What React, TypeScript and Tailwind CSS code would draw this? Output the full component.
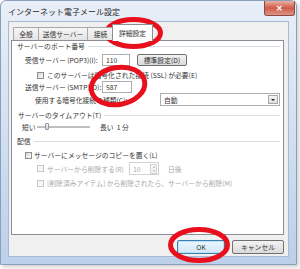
import React from "react";

function Check({ disabled = false }: { disabled?: boolean }) {
  return (
    <span
      className={
        disabled
          ? "inline-block w-[7px] h-[7px] shrink-0 border border-[#c8c8c8] bg-[#f6f6f6]"
          : "inline-block w-[7px] h-[7px] shrink-0 border border-[#8e8f8f] bg-linear-to-br from-[#d8d8d8] to-[#fbfbfb]"
      }
    />
  );
}

function GroupHeader({ label, left }: { label: string; left: string }) {
  return (
    <div className={"flex items-center h-[10px] pr-[3px] " + left}>
      <span className="whitespace-nowrap">{label}</span>
      <span className="flex-1 h-px bg-[#d5dfe5] ml-[3px]" />
    </div>
  );
}

export default function App() {
  return (
    <div className="relative w-[300px] h-[269px] bg-white overflow-hidden font-['Noto_Sans_CJK_JP',sans-serif] text-[6.8px] leading-[10px] text-[#333]">
      {/* Window */}
      <div className="w-[297px] h-[265px] rounded-t-[6px] border border-[#8a9fba] bg-linear-to-b from-[#e9eff7] via-[#d2e0f1] to-[#bcd0ea] flex flex-col shadow-[2px_2px_4px_rgba(0,0,0,0.2)]">
        {/* Title bar */}
        <div className="h-[20px] flex justify-between items-start shrink-0">
          <span className="pl-[7px] pt-[6px] text-[8px] leading-[10px] text-[#2a2a2a] whitespace-nowrap">
            インターネット電子メール設定
          </span>
          <div className="w-[31px] h-[15px] mr-[1px] rounded-b-[3px] border border-t-0 border-[#8a4a42] bg-linear-to-b from-[#eab0a2] via-[#cf5a4c] to-[#dd9583] flex items-center justify-center">
            <span className="text-white text-[8px] leading-[8px] font-bold">✕</span>
          </div>
        </div>
        {/* Body */}
        <div className="flex-1 flex px-[7px] pb-[7px]">
          <div className="flex-1 border border-[#a7bad2] bg-[#f0f0f0] flex flex-col pl-[2px] pr-[4px] pt-[2px]">
            {/* Tabs */}
            <div className="h-[16px] flex items-end pl-[2px] relative z-10">
              <div className="w-[26px] h-[13px] border border-b-0 border-[#a8a8a8] bg-linear-to-b from-[#f6f6f6] to-[#e4e4e4] flex items-center justify-center">
                全般
              </div>
              <div className="w-[49px] h-[13px] border border-b-0 border-l-0 border-[#a8a8a8] bg-linear-to-b from-[#f6f6f6] to-[#e4e4e4] flex items-center justify-center whitespace-nowrap">
                送信サーバー
              </div>
              <div className="w-[26px] h-[13px] border border-b-0 border-l-0 border-[#a8a8a8] bg-linear-to-b from-[#f6f6f6] to-[#e4e4e4] flex items-center justify-center">
                接続
              </div>
              <div className="w-[41px] h-[17px] -ml-[2px] -mb-[1px] border border-b-0 border-[#8c8e94] bg-white flex items-center justify-center whitespace-nowrap">
                詳細設定
              </div>
            </div>
            {/* Panel */}
            <div className="w-[273px] h-[195px] border border-[#8c8e94] bg-white flex flex-col">
              <GroupHeader label="サーバーのポート番号" left="pl-[5px]" />
              {/* 受信 */}
              <div className="mt-[3px] h-[12px] flex items-center pl-[13px]">
                <span className="w-[77px] whitespace-nowrap">受信サーバー (POP3)(I):</span>
                <div className="w-[28px] h-[12px] border border-[#abadb3] bg-white pl-[3px] flex items-center">110</div>
                <div className="ml-[7px] w-[50px] h-[12px] border border-[#707070] rounded-[2px] bg-linear-to-b from-[#f3f3f3] to-[#dadada] flex items-center justify-center whitespace-nowrap">
                  標準設定(D)
                </div>
              </div>
              {/* SSL */}
              <div className="mt-[4px] h-[10px] flex items-center pl-[25px] gap-[3px]">
                <Check />
                <span className="whitespace-nowrap">このサーバーは暗号化された接続 (SSL) が必要(E)</span>
              </div>
              {/* 送信 */}
              <div className="mt-[1px] h-[12px] flex items-center pl-[13px]">
                <span className="w-[77px] whitespace-nowrap">送信サーバー (SMTP)(O):</span>
                <div className="w-[30px] h-[12px] border border-[#abadb3] bg-white pl-[3px] flex items-center">587</div>
              </div>
              {/* 暗号化 */}
              <div className="h-[13px] flex items-center pl-[23px]">
                <span className="w-[125px] whitespace-nowrap">使用する暗号化接続の種類(C):</span>
                <div className="w-[120px] h-[13px] border border-[#abadb3] bg-white flex items-center justify-between pl-[3px] pr-[1px]">
                  <span>自動</span>
                  <div className="w-[10px] h-[9px] border border-[#a8a8a8] bg-linear-to-b from-[#f4f4f4] to-[#dedede] flex items-center justify-center">
                    <span className="w-0 h-0 border-l-[2px] border-r-[2px] border-t-[2px] border-l-transparent border-r-transparent border-t-[#222]" />
                  </div>
                </div>
              </div>
              {/* Timeout */}
              <div className="mt-[4px]">
                <GroupHeader label="サーバーのタイムアウト(T)" left="pl-[6px]" />
              </div>
              <div className="mt-[2px] h-[10px] flex items-center pl-[10px]">
                <span className="w-[15px] whitespace-nowrap">短い</span>
                <div className="relative w-[53px] h-[10px] flex items-center">
                  <div className="w-full h-[2px] border border-[#c0c0c0] bg-[#e7eaea]" />
                  <div className="absolute left-[8px] top-[1px] w-[4px] h-[7px] border border-[#8a96a4] bg-linear-to-b from-[#f3f5f7] to-[#cfd6de] rounded-[1px]" />
                </div>
                <span className="ml-[10px] whitespace-nowrap">長い&nbsp;&nbsp;1 分</span>
              </div>
              {/* 配信 */}
              <div className="mt-[4px]">
                <GroupHeader label="配信" left="pl-[5px]" />
              </div>
              <div className="mt-[4px] h-[10px] flex items-center pl-[13px] gap-[2px]">
                <Check />
                <span className="whitespace-nowrap">サーバーにメッセージのコピーを置く(L)</span>
              </div>
              <div className="mt-[2px] h-[13px] flex items-center pl-[25px] text-[#a8a8a8]">
                <Check disabled />
                <span className="ml-[3px] w-[82px] whitespace-nowrap">サーバーから削除する(R)</span>
                <div className="w-[30px] h-[13px] border border-[#d2d2d2] bg-white flex items-center justify-between pl-[3px] pr-[1px]">
                  <span>10</span>
                  <div className="w-[7px] h-[10px] flex flex-col border border-[#d5d5d5] bg-[#f4f4f4]">
                    <div className="flex-1 flex items-center justify-center">
                      <span className="w-0 h-0 border-l-[1.5px] border-r-[1.5px] border-b-[2px] border-l-transparent border-r-transparent border-b-[#b0b0b0]" />
                    </div>
                    <div className="flex-1 flex items-center justify-center">
                      <span className="w-0 h-0 border-l-[1.5px] border-r-[1.5px] border-t-[2px] border-l-transparent border-r-transparent border-t-[#b0b0b0]" />
                    </div>
                  </div>
                </div>
                <span className="ml-[9px] whitespace-nowrap">日後</span>
              </div>
              <div className="mt-[3px] h-[10px] flex items-center pl-[25px] gap-[3px] text-[#a8a8a8]">
                <Check disabled />
                <span className="whitespace-nowrap">[削除済みアイテム] から削除されたら、サーバーから削除(M)</span>
              </div>
            </div>
            {/* Buttons */}
            <div className="mt-[5px] w-[273px] flex justify-end gap-[7px]">
              <div className="w-[48px] h-[14px] rounded-[2px] border border-[#3c7fb1] bg-linear-to-b from-[#eaf6fd] to-[#d2e8f6] shadow-[inset_0_0_0_1px_#b9e0f7] flex items-center justify-center">
                OK
              </div>
              <div className="w-[52px] h-[14px] rounded-[2px] border border-[#707070] bg-linear-to-b from-[#f3f3f3] to-[#dadada] flex items-center justify-center whitespace-nowrap">
                キャンセル
              </div>
            </div>
          </div>
        </div>
      </div>

      {/* Red annotation ellipses */}
      <svg className="absolute left-0 top-0 pointer-events-none" width="300" height="269" viewBox="0 0 300 269">
        <ellipse cx="133.5" cy="33" rx="27" ry="13.5" fill="none" stroke="#e8101c" strokeWidth="5" />
        <ellipse cx="118" cy="86" rx="27" ry="18.5" fill="none" stroke="#e8101c" strokeWidth="5" transform="rotate(-10 118 86)" />
        <ellipse cx="199" cy="245" rx="28.5" ry="15.5" fill="none" stroke="#e8101c" strokeWidth="5" />
      </svg>
    </div>
  );
}
